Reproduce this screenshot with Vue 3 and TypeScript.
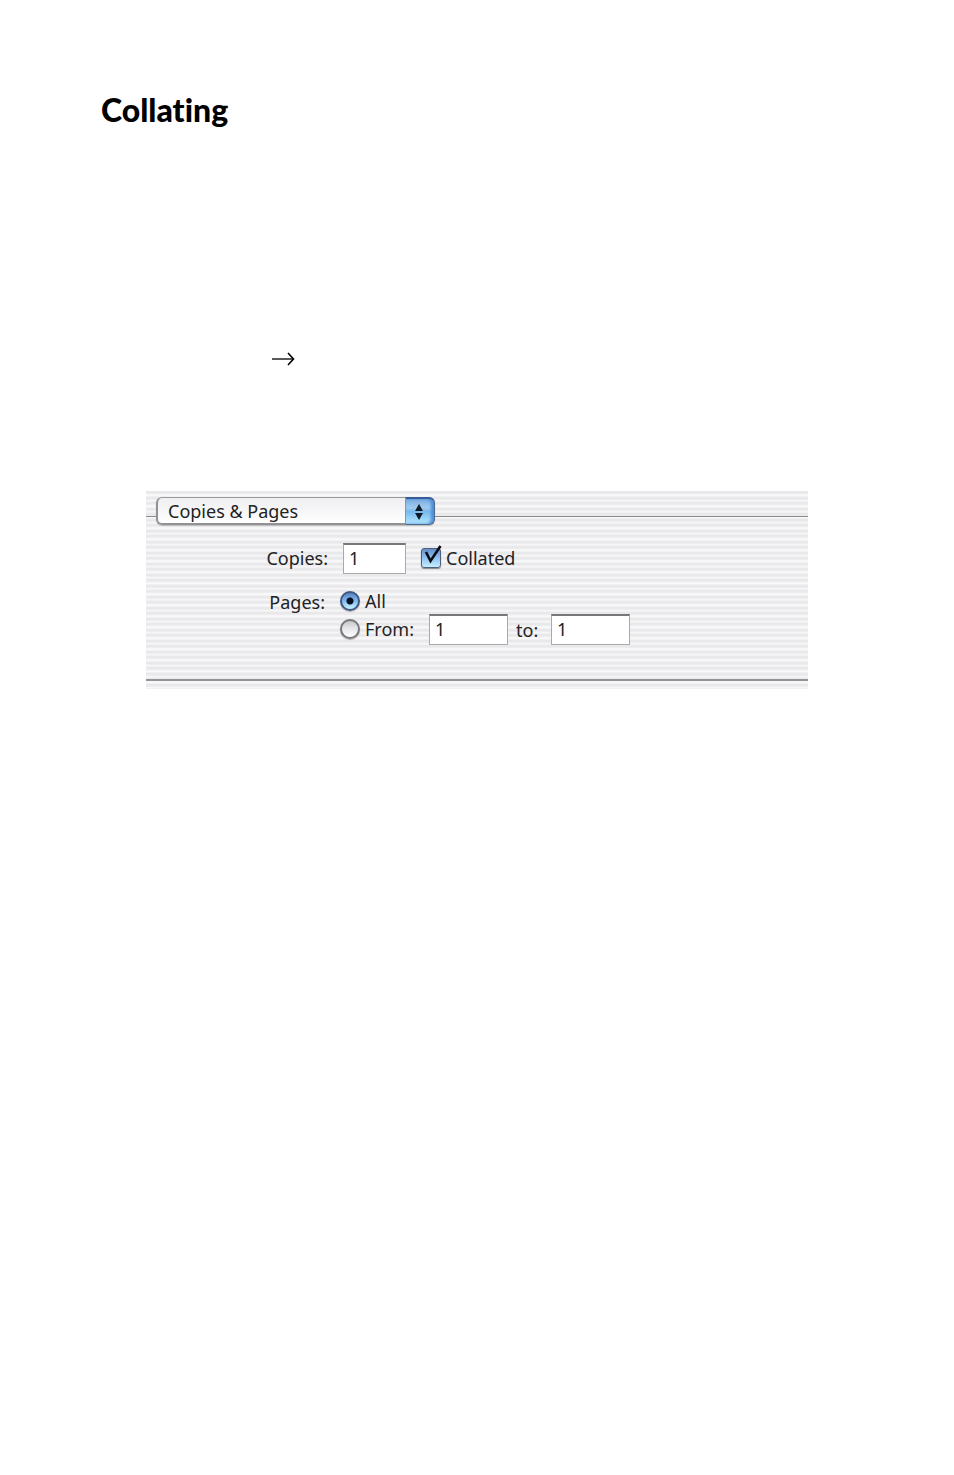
<script setup lang="ts">
import { ref } from 'vue'

const section = ref('Copies & Pages')
const copies = ref('1')
const collated = ref(true)
const range = ref<'all' | 'from'>('all')
const first = ref('1')
const last = ref('1')
</script>

<template>
  <main class="page">
    <h1 class="title">Collating</h1>
    <svg class="arrow" viewBox="0 0 24 16" aria-hidden="true">
      <path d="M1 8H22" stroke="#222" stroke-width="1.5" fill="none" />
      <path d="M17 2L22.500 8L17 14" stroke="#000" stroke-width="1.6" fill="none" />
    </svg>

    <form class="panel" @submit.prevent>
      <div class="header">
        <div class="popup">
          <select v-model="section" class="select" aria-label="Print section">
            <option>Copies &amp; Pages</option>
          </select>
          <span class="cap">
            <svg viewBox="0 0 10 16" aria-hidden="true">
              <path d="M5 0L9 7H1ZM5 16L9 9H1Z" fill="#101a26" />
            </svg>
          </span>
        </div>
      </div>

      <div class="row copies">
        <label class="name" for="copies">Copies:</label>
        <input id="copies" v-model="copies" class="field short" type="text" />
        <label class="choice">
          <span class="mark">
            <input v-model="collated" class="check" type="checkbox" />
            <svg v-if="collated" class="tick" viewBox="0 0 22 24" aria-hidden="true">
              <path d="M5 8L9.500 17L19.500 2" fill="none" stroke="#0b0d12" stroke-width="2.600" />
            </svg>
          </span>
          Collated
        </label>
      </div>

      <div class="row pages" role="radiogroup" aria-labelledby="pages-name">
        <span id="pages-name" class="name">Pages:</span>
        <div class="options">
          <label class="choice all">
            <input v-model="range" class="radio" type="radio" name="range" value="all" />
            All
          </label>
          <div class="line">
            <label class="choice from">
              <input v-model="range" class="radio" type="radio" name="range" value="from" />
              From:
            </label>
            <input v-model="first" class="field" type="text" aria-label="From page" />
            <label class="to" for="last">to:</label>
            <input id="last" v-model="last" class="field" type="text" />
          </div>
        </div>
      </div>
      <div class="rule"></div>
    </form>
  </main>
</template>

<style>
body {
  background: #fff;
}
</style>

<style scoped>
.page {
  padding: 90px 146px 0;
  color: #222;
  font: 18px/24px "Noto Sans", "Open Sans", sans-serif;
}
.title {
  margin: 0 0 0 -45px;
  color: #000;
  font: 900 32px/40px Lato, "Noto Sans", sans-serif;
  font-variant-ligatures: none;
}
.arrow {
  display: block;
  width: 24px;
  height: 16px;
  margin: 221px 0 0 125px;
}
.panel {
  box-sizing: border-box;
  margin-top: 124px;
  padding: 6px 0 8px;
  background: repeating-linear-gradient(
    #e9e8eb 0,
    #e9e8eb 2px,
    #fafafb 4px,
    #f8f8f9 5px,
    #e9e8eb 6px,
    #e9e8eb 8px,
    #fafafb 10px,
    #e9e8eb 11px
  );
}
.header {
  display: flex;
  align-items: center;
}
.header::before,
.header::after {
  content: "";
  width: 10px;
  height: 1px;
  margin-top: 10px;
  background: #888;
}
.header::after {
  flex: 1;
}
.popup {
  position: relative;
  width: 279px;
  height: 28px;
}
.select {
  box-sizing: border-box;
  width: 100%;
  height: 100%;
  padding: 0 40px 0 10px;
  border: 2px solid #929296;
  border-top: 1px solid #999;
  border-radius: 6px;
  appearance: none;
  background: linear-gradient(#efeff1, #f6f6f7 50%, #fff);
  color: #222;
  font: inherit;
  box-shadow: 0 1px 1px #bbb;
}
.cap {
  position: absolute;
  top: 0;
  right: 0;
  box-sizing: border-box;
  display: flex;
  align-items: center;
  justify-content: center;
  width: 30px;
  height: 100%;
  padding-right: 3px;
  border: 1px solid #50698f;
  border-left-color: #719bc6;
  border-top: 2px solid #365b9a;
  border-radius: 0 6px 6px 0;
  background: linear-gradient(#7cacdf, #9fcaf0 35%, #77b8ed 50%, #b5e8ff);
  box-shadow: inset -3px 0 3px #4b8fda;
  pointer-events: none;
}
.cap svg {
  width: 10px;
  height: 16px;
}
.row {
  display: flex;
}
.copies {
  align-items: center;
  margin-top: 18px;
}
.name {
  width: 182px;
  margin-right: 15px;
  text-align: right;
}
.field {
  box-sizing: border-box;
  width: 79px;
  height: 31px;
  padding: 0 0 2px 5px;
  border: 1px solid #aaa;
  border-top: 2px solid #777;
  border-radius: 0;
  background: #fff;
  color: #222;
  font: inherit;
}
.short {
  width: 63px;
}
.choice {
  display: flex;
  align-items: center;
  gap: 5px;
}
.copies .name,
.copies .choice {
  padding-bottom: 2px;
}
.copies .choice {
  margin-left: 15px;
}
.mark {
  position: relative;
  display: flex;
}
.check {
  width: 20px;
  height: 20px;
  margin: 0;
  border: 1px solid #4d5f7c;
  border-radius: 3px;
  appearance: none;
  background: linear-gradient(#6390cb, #8cbcee 45%, #c3eeff);
  box-shadow: 0 1px 1px #888;
}
.tick {
  position: absolute;
  top: -4px;
  left: 0;
  width: 22px;
  height: 24px;
  pointer-events: none;
}
.pages {
  margin-top: 15px;
}
.pages .name {
  width: 179px;
  margin-top: 1px;
}
.options {
  display: flex;
  flex-direction: column;
  gap: 1px;
}
.radio {
  width: 20px;
  height: 20px;
  margin: 0;
  border: 2px solid #77777b;
  border-radius: 50%;
  appearance: none;
  background: linear-gradient(#c6c6c8, #e3e3e5 40%, #fff);
  box-shadow: 0 1px 1px #aaa;
}
.radio:checked {
  border-color: #405880;
  background:
    radial-gradient(circle, #07101f 0 3px, transparent 4px),
    linear-gradient(#5685c5, #83b9f1 50%, #c8f5ff);
}
.line {
  display: flex;
  align-items: center;
}
.from {
  width: 89px;
  padding-bottom: 2px;
}
.to {
  width: 43px;
  box-sizing: border-box;
  padding-left: 8px;
}
.rule {
  height: 2px;
  margin-top: 34px;
  background: #949496;
}
</style>
